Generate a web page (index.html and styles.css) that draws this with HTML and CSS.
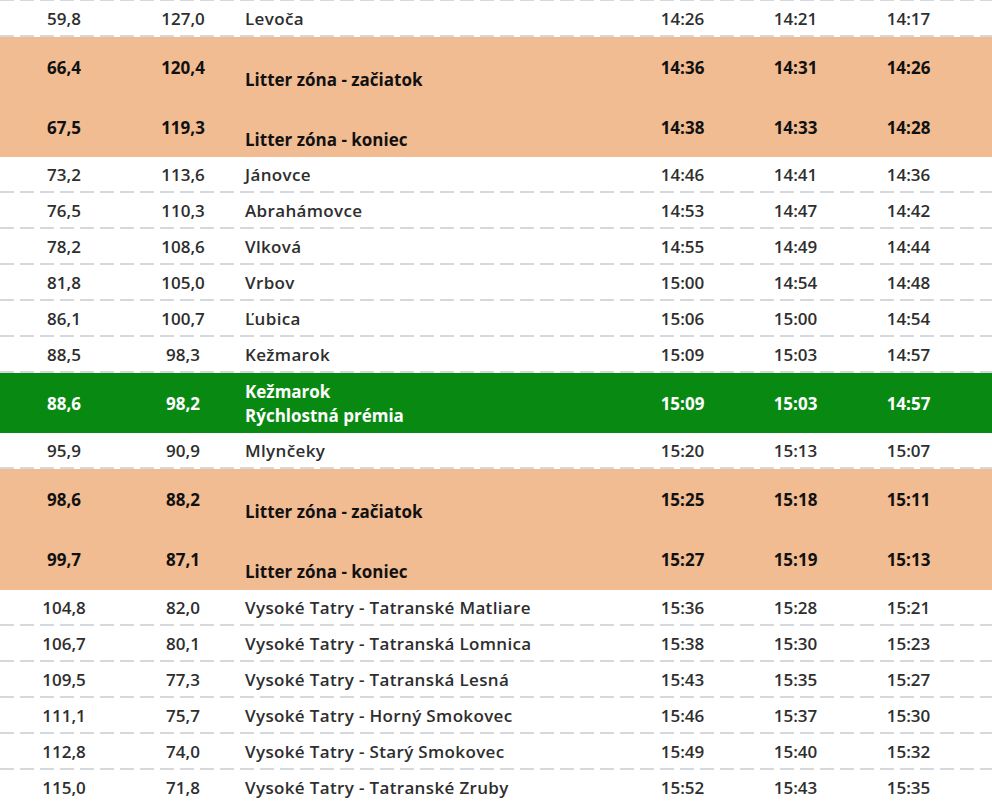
FILE: index.html
```html
<!DOCTYPE html>
<html lang="sk">
<head>
<meta charset="utf-8">
<link rel="stylesheet" href="styles.css">
</head>
<body>
<div class="table">
  <div class="row"><div class="c num">59,8</div><div class="c num">127,0</div><div class="c name">Levoča</div><div class="c t">14:26</div><div class="c t">14:21</div><div class="c t">14:17</div></div>
  <div class="row litter"><div class="c num">66,4</div><div class="c num">120,4</div><div class="c name"><br>Litter zóna - začiatok</div><div class="c t">14:36</div><div class="c t">14:31</div><div class="c t">14:26</div></div>
  <div class="row litter"><div class="c num">67,5</div><div class="c num">119,3</div><div class="c name"><br>Litter zóna - koniec</div><div class="c t">14:38</div><div class="c t">14:33</div><div class="c t">14:28</div></div>
  <div class="row"><div class="c num">73,2</div><div class="c num">113,6</div><div class="c name">Jánovce</div><div class="c t">14:46</div><div class="c t">14:41</div><div class="c t">14:36</div></div>
  <div class="row"><div class="c num">76,5</div><div class="c num">110,3</div><div class="c name">Abrahámovce</div><div class="c t">14:53</div><div class="c t">14:47</div><div class="c t">14:42</div></div>
  <div class="row"><div class="c num">78,2</div><div class="c num">108,6</div><div class="c name">Vlková</div><div class="c t">14:55</div><div class="c t">14:49</div><div class="c t">14:44</div></div>
  <div class="row"><div class="c num">81,8</div><div class="c num">105,0</div><div class="c name">Vrbov</div><div class="c t">15:00</div><div class="c t">14:54</div><div class="c t">14:48</div></div>
  <div class="row"><div class="c num">86,1</div><div class="c num">100,7</div><div class="c name">Ľubica</div><div class="c t">15:06</div><div class="c t">15:00</div><div class="c t">14:54</div></div>
  <div class="row"><div class="c num">88,5</div><div class="c num">98,3</div><div class="c name">Kežmarok</div><div class="c t">15:09</div><div class="c t">15:03</div><div class="c t">14:57</div></div>
  <div class="row prize"><div class="c num">88,6</div><div class="c num">98,2</div><div class="c name">Kežmarok<br>Rýchlostná prémia</div><div class="c t">15:09</div><div class="c t">15:03</div><div class="c t">14:57</div></div>
  <div class="row"><div class="c num">95,9</div><div class="c num">90,9</div><div class="c name">Mlynčeky</div><div class="c t">15:20</div><div class="c t">15:13</div><div class="c t">15:07</div></div>
  <div class="row litter"><div class="c num">98,6</div><div class="c num">88,2</div><div class="c name"><br>Litter zóna - začiatok</div><div class="c t">15:25</div><div class="c t">15:18</div><div class="c t">15:11</div></div>
  <div class="row litter last"><div class="c num">99,7</div><div class="c num">87,1</div><div class="c name"><br>Litter zóna - koniec</div><div class="c t">15:27</div><div class="c t">15:19</div><div class="c t">15:13</div></div>
  <div class="row"><div class="c num">104,8</div><div class="c num">82,0</div><div class="c name">Vysoké Tatry - Tatranské Matliare</div><div class="c t">15:36</div><div class="c t">15:28</div><div class="c t">15:21</div></div>
  <div class="row"><div class="c num">106,7</div><div class="c num">80,1</div><div class="c name">Vysoké Tatry - Tatranská Lomnica</div><div class="c t">15:38</div><div class="c t">15:30</div><div class="c t">15:23</div></div>
  <div class="row"><div class="c num">109,5</div><div class="c num">77,3</div><div class="c name">Vysoké Tatry - Tatranská Lesná</div><div class="c t">15:43</div><div class="c t">15:35</div><div class="c t">15:27</div></div>
  <div class="row"><div class="c num">111,1</div><div class="c num">75,7</div><div class="c name">Vysoké Tatry - Horný Smokovec</div><div class="c t">15:46</div><div class="c t">15:37</div><div class="c t">15:30</div></div>
  <div class="row"><div class="c num">112,8</div><div class="c num">74,0</div><div class="c name">Vysoké Tatry - Starý Smokovec</div><div class="c t">15:49</div><div class="c t">15:40</div><div class="c t">15:32</div></div>
  <div class="row"><div class="c num">115,0</div><div class="c num">71,8</div><div class="c name">Vysoké Tatry - Tatranské Zruby</div><div class="c t">15:52</div><div class="c t">15:43</div><div class="c t">15:35</div></div>
</div>
</body>
</html>
```

FILE: styles.css
```css
html, body {
  margin: 0;
  padding: 0;
  background: #ffffff;
}
body {
  font-family: "Open Sans", "Liberation Sans", sans-serif;
  font-size: 17px;
  font-weight: 600;
  color: #2e2e2e;
  line-height: 24px;
  overflow: hidden;
}
.table {
  display: flex;
  flex-direction: column;
  padding-top: 1px;
  background: repeating-linear-gradient(to right, #d5d9dd 0 14px, transparent 14px 20px) top left / 100% 1px no-repeat;
}
.row {
  display: grid;
  grid-template-columns: 128px 110px 388px 113px 113px 113px 1fr;
  align-items: center;
  height: 36px;
  box-sizing: border-box;
  padding-top: 1px;
  padding-bottom: 1px;
  background: repeating-linear-gradient(to right, #d5d9dd 0 14px, transparent 14px 20px) bottom left / 100% 2px no-repeat;
}
.c {
  text-align: center;
}
.c.name {
  text-align: left;
  padding-left: 7px;
  letter-spacing: 0.35px;
}
.row.litter {
  height: 60px;
  padding-top: 1px;
  padding-bottom: 0;
  background: #f2bc92;
  color: #111111;
  font-weight: 700;
}
.row.litter .name,
.row.prize .name {
  letter-spacing: 0;
}
.row.litter.last {
  height: 61px;
}
.row.prize {
  height: 60px;
  padding-top: 1px;
  padding-bottom: 0;
  background: #088a12;
  color: #ffffff;
  font-weight: 700;
}
```
